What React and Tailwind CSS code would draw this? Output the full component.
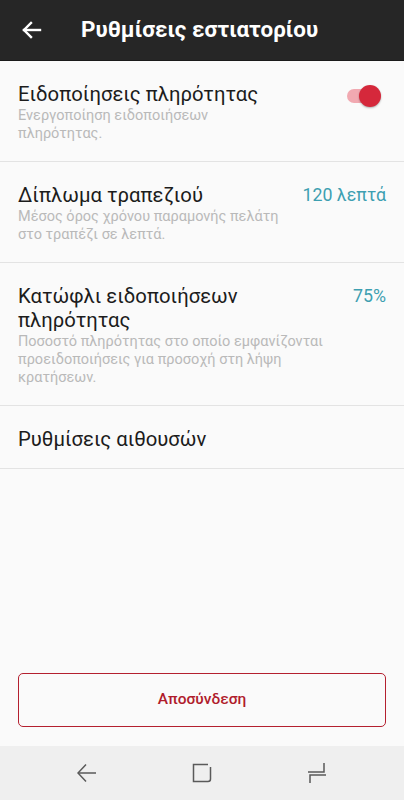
import React, { useState } from 'react'

function Toggle({ on, onClick }) {
  return (
    <button onClick={onClick} className='relative w-[40px] h-[26px] shrink-0 mt-[1px]'>
      <span className={'absolute left-[6px] top-[6px] w-[30px] h-[14px] rounded-full ' + (on ? 'bg-[#f1a9b1]' : 'bg-[#bdbdbd]')}></span>
      <span className={'absolute top-[2px] w-[22px] h-[22px] rounded-full shadow-[0_1px_2px_rgba(0,0,0,0.3)] ' + (on ? 'left-[18px] bg-[#d5283b]' : 'left-0 bg-[#f5f5f5]')}></span>
    </button>
  )
}

function Row({ title, sub, right, textW }) {
  return (
    <div className='flex items-start justify-between px-[18px] pt-[21px] pb-[18px] border-b border-[#e3e3e3]'>
      <div className={textW}>
        <p className='text-[20.3px] leading-[24px] text-[#1c1c1c]'>{title}</p>
        {sub && <p className='mt-[1px] text-[14.5px] leading-[18px] text-[#b9b9b9]'>{sub}</p>}
      </div>
      {right}
    </div>
  )
}

export default function App() {
  let [notif, setNotif] = useState(true)

  return (
    <div className='w-[404px] h-[800px] flex flex-col bg-[#fafafa] font-["Roboto",sans-serif] overflow-hidden'>
      <div className='h-[61px] bg-[#262626] border-b border-[#1a1a1a] flex items-center px-[22px] shrink-0'>
        <svg width='20' height='18' viewBox='0 0 20 18' fill='none' stroke='white' strokeWidth='2.4' strokeLinecap='square'>
          <path d='M2 9 H18' />
          <path d='M9 2 L2 9 L9 16' />
        </svg>
        <h1 className='ml-[39px] text-white text-[22.4px] font-bold'>Ρυθμίσεις εστιατορίου</h1>
      </div>

      <Row
        title='Ειδοποίησεις πληρότητας'
        sub='Ενεργοποίηση ειδοποιήσεων πληρότητας.'
        textW='w-[262px]'
        right={<div className='mr-[5px]'><Toggle on={notif} onClick={() => setNotif(p => !p)} /></div>}
      />
      <Row
        title='Δίπλωμα τραπεζιού'
        sub='Μέσος όρος χρόνου παραμονής πελάτη στο τραπέζι σε λεπτά.'
        textW='w-[272px]'
        right={<span className='text-[17.8px] leading-[24px] text-[#3d9fb1]'>120 λεπτά</span>}
      />
      <Row
        title='Κατώφλι ειδοποιήσεων πληρότητας'
        sub='Ποσοστό πληρότητας στο οποίο εμφανίζονται προειδοποιήσεις για προσοχή στη λήψη κρατήσεων.'
        textW='w-[318px]'
        right={<span className='text-[17.8px] leading-[24px] text-[#3d9fb1]'>75%</span>}
      />
      <div className='px-[18px] pt-[21px] pb-[17px] border-b border-[#e3e3e3]'>
        <p className='text-[20.3px] leading-[24px] text-[#1c1c1c]'>Ρυθμίσεις αιθουσών</p>
      </div>

      <div className='flex-1'></div>

      <div className='px-[18px] pb-[19px]'>
        <button className='w-full h-[54px] border border-[#b4202f] rounded-[5px] text-[#b01c2c] text-[15.5px] font-medium'>Αποσύνδεση</button>
      </div>

      <div className='h-[54px] bg-[#efefef] flex items-center justify-between px-[77px] shrink-0'>
        <svg width='20' height='20' viewBox='0 0 20 20' fill='none' stroke='#5a5a5a' strokeWidth='1.5'>
          <path d='M1 10 H19' />
          <path d='M9 1.5 L1 10 L9 18.5' />
        </svg>
        <svg width='20' height='20' viewBox='0 0 20 20' fill='none' stroke='#5a5a5a' strokeWidth='1.5'>
          <path d='M16 1.5 H1.5 V18.5 H16 Q18.5 18.5 18.5 16 V4' />
        </svg>
        <svg width='20' height='22' viewBox='0 0 20 22' fill='none' stroke='#5a5a5a' strokeWidth='1.5'>
          <path d='M1 10 H17 V1' />
          <path d='M19 13 H3 V21' />
        </svg>
      </div>
    </div>
  )
}
